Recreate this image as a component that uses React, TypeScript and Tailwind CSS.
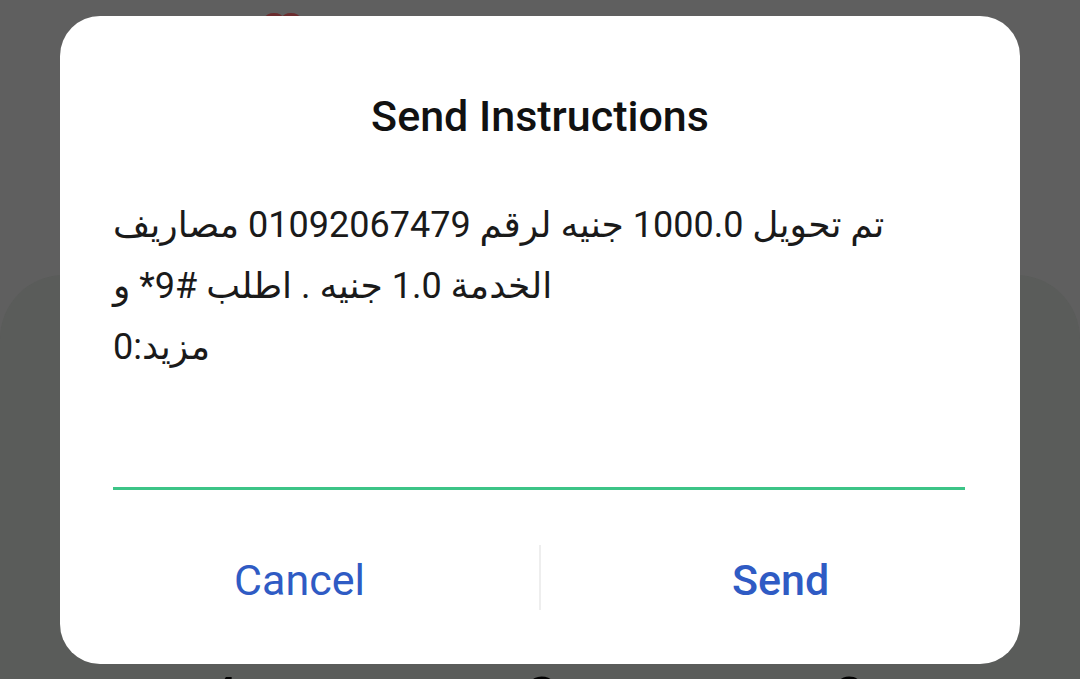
import React from 'react';

const lines = [
  'تم تحويل 1000.0 جنيه لرقم 01092067479 مصاريف',
  'الخدمة 1.0 جنيه . اطلب #9* و',
  'مزيد:0',
];

export default function App() {
  return (
    <div className="relative w-full h-[679px] overflow-hidden bg-[#5f5f5f]" style={{ fontFamily: 'Roboto, "DejaVu Sans", sans-serif' }}>
      {/* dimmed screen behind the dialog */}
      <div className="flex justify-start pl-[262px] pt-[10px] h-[275px]">
        <svg width="40" height="20" viewBox="0 0 40 20">
          <ellipse cx="12" cy="8" rx="9" ry="5" fill="#6b2c2e" />
          <ellipse cx="29" cy="8" rx="9" ry="5" fill="#6b2c2e" />
        </svg>
      </div>
      <div className="h-[420px] rounded-t-[64px] bg-[#5a5c5a] flex flex-col justify-end">
        <div className="flex h-[30px] text-black text-[60px] leading-none pt-[4px]">
          <span className="w-[444px] text-center">4</span>
          <span className="w-[196px] text-center">3</span>
          <span className="w-[418px] text-center">0</span>
        </div>
      </div>

      {/* dialog */}
      <div className="absolute left-[60px] top-[16px] w-[960px] h-[648px] rounded-[40px] bg-white flex flex-col">
        <h1 className="mt-[76px] h-[48px] leading-[48px] text-center text-[43px] font-medium text-[#111]">
          Send Instructions
        </h1>
        <div className="mt-[55px] ml-[53px] mr-[55px] h-[295px] border-b-[3px] border-[#3cc487]">
          <div dir="rtl" className="text-left text-[36px] leading-[61px] text-[#1a1a1a]">
            {lines.map((l, i) => (
              <div key={i}>{l}</div>
            ))}
          </div>
        </div>
        <div className="mt-[38px] h-[98px] flex items-center">
          <button className="flex-1 h-full pt-[6px] text-[43px] text-[#2f5bc4]">Cancel</button>
          <div className="w-[2px] h-[65px] bg-[#eeeeee]" />
          <button className="flex-1 h-full pt-[6px] text-[43px] font-medium text-[#2f5bc4]">Send</button>
        </div>
      </div>
    </div>
  );
}
